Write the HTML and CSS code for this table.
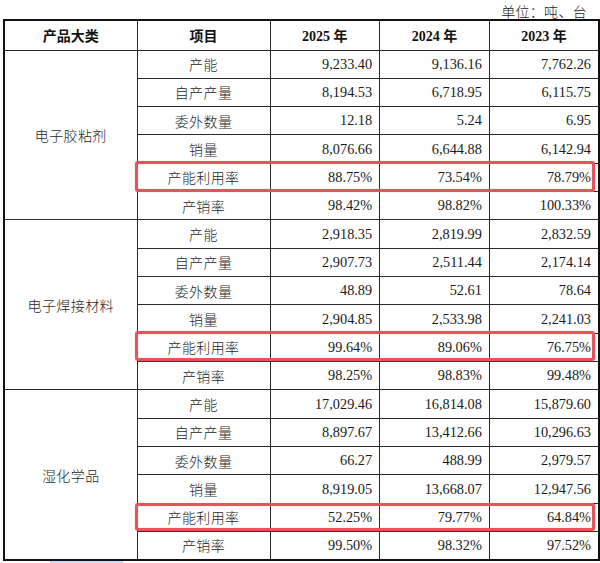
FILE: index.html
```html
<!DOCTYPE html>
<html lang="zh-CN">
<head>
<meta charset="utf-8">
<title>产能利用率</title>
<link rel="stylesheet" href="styles.css">
</head>
<body>
<div class="page">
  <div class="unit">单位：吨、台</div>
  <div class="wrap">
    <table class="data">
      <colgroup>
        <col class="c-cat"><col class="c-item"><col class="c-num"><col class="c-num"><col class="c-num">
      </colgroup>
      <thead>
        <tr class="head">
          <th>产品大类</th><th>项目</th><th><span class="yr">2025</span> 年</th><th><span class="yr">2024</span> 年</th><th><span class="yr">2023</span> 年</th>
        </tr>
      </thead>
      <tbody>
        <tr><td class="cat" rowspan="6">电子胶粘剂</td><td class="item">产能</td><td class="num">9,233.40</td><td class="num">9,136.16</td><td class="num">7,762.26</td></tr>
        <tr><td class="item">自产产量</td><td class="num">8,194.53</td><td class="num">6,718.95</td><td class="num">6,115.75</td></tr>
        <tr><td class="item">委外数量</td><td class="num">12.18</td><td class="num">5.24</td><td class="num">6.95</td></tr>
        <tr><td class="item">销量</td><td class="num">8,076.66</td><td class="num">6,644.88</td><td class="num">6,142.94</td></tr>
        <tr><td class="item">产能利用率</td><td class="num">88.75%</td><td class="num">73.54%</td><td class="num">78.79%</td></tr>
        <tr><td class="item">产销率</td><td class="num">98.42%</td><td class="num">98.82%</td><td class="num">100.33%</td></tr>

        <tr><td class="cat" rowspan="6">电子焊接材料</td><td class="item">产能</td><td class="num">2,918.35</td><td class="num">2,819.99</td><td class="num">2,832.59</td></tr>
        <tr><td class="item">自产产量</td><td class="num">2,907.73</td><td class="num">2,511.44</td><td class="num">2,174.14</td></tr>
        <tr><td class="item">委外数量</td><td class="num">48.89</td><td class="num">52.61</td><td class="num">78.64</td></tr>
        <tr><td class="item">销量</td><td class="num">2,904.85</td><td class="num">2,533.98</td><td class="num">2,241.03</td></tr>
        <tr><td class="item">产能利用率</td><td class="num">99.64%</td><td class="num">89.06%</td><td class="num">76.75%</td></tr>
        <tr><td class="item">产销率</td><td class="num">98.25%</td><td class="num">98.83%</td><td class="num">99.48%</td></tr>

        <tr><td class="cat" rowspan="6">湿化学品</td><td class="item">产能</td><td class="num">17,029.46</td><td class="num">16,814.08</td><td class="num">15,879.60</td></tr>
        <tr><td class="item">自产产量</td><td class="num">8,897.67</td><td class="num">13,412.66</td><td class="num">10,296.63</td></tr>
        <tr><td class="item">委外数量</td><td class="num">66.27</td><td class="num">488.99</td><td class="num">2,979.57</td></tr>
        <tr><td class="item">销量</td><td class="num">8,919.05</td><td class="num">13,668.07</td><td class="num">12,947.56</td></tr>
        <tr><td class="item">产能利用率</td><td class="num">52.25%</td><td class="num">79.77%</td><td class="num">64.84%</td></tr>
        <tr><td class="item">产销率</td><td class="num">99.50%</td><td class="num">98.32%</td><td class="num">97.52%</td></tr>
      </tbody>
    </table>
    <div class="mark mark-1"></div>
    <div class="mark mark-2"></div>
    <div class="mark mark-3"></div>
  </div>
  <div class="bluebar"></div>
</div>
</body>
</html>
```

FILE: styles.css
```css
html, body {
  margin: 0;
  padding: 0;
  background: #ffffff;
}

body {
  font-family: "Liberation Serif", "Noto Sans CJK SC", serif;
  color: #1a1a1a;
  font-size: 14px;
}

.page {
  width: 595px;
  padding-left: 3px;
}

.unit {
  height: 19px;
  padding-top: 2px;
  box-sizing: border-box;
  line-height: 18px;
  text-align: right;
  padding-right: 11px;
  font-family: "Noto Sans CJK SC", sans-serif;
  font-weight: 300;
  font-size: 14px;
  letter-spacing: 0.3px;
  color: #222;
}

.wrap {
  position: relative;
}

.data {
  width: 595px;
  table-layout: fixed;
  border-collapse: collapse;
  border: 2px solid #111;
}

.c-cat { width: 133px; }
.c-item { width: 133px; }
.c-num { width: 109.67px; }

.data th,
.data td {
  border: 1px solid #2a2a2a;
  padding: 0;
  vertical-align: middle;
}

.head {
  height: 30px;
}

.head th {
  font-family: "Liberation Serif", "Noto Sans CJK SC", serif;
  font-weight: 700;
  font-size: 14px;
  text-align: center;
  color: #111;
}

.yr {
  font-family: "Liberation Serif", serif;
  font-weight: 700;
}

.data tbody tr {
  height: 28.33px;
}

.cat,
.item {
  font-family: "Noto Sans CJK SC", sans-serif;
  font-weight: 300;
  text-align: center;
  letter-spacing: 0.4px;
  color: #1e1e1e;
}

.num {
  font-family: "Liberation Serif", serif;
  font-size: 14.3px;
  text-align: right;
  padding-right: 7px !important;
  color: #1a1a1a;
}

.mark {
  position: absolute;
  left: 132px;
  width: 460px;
  box-sizing: border-box;
  border: 3px solid #e8525b;
  border-radius: 3px;
  box-shadow: 0 0 1px #f08a90, inset 0 0 1px #f08a90;
}

.mark-1 { top: 142px; height: 31px; }
.mark-2 { top: 312px; height: 30px; }
.mark-3 { top: 484px; height: 28px; }

.bluebar {
  width: 73px;
  height: 3px;
  margin-left: 47px;
  background: #c9dcf3;
}
```
